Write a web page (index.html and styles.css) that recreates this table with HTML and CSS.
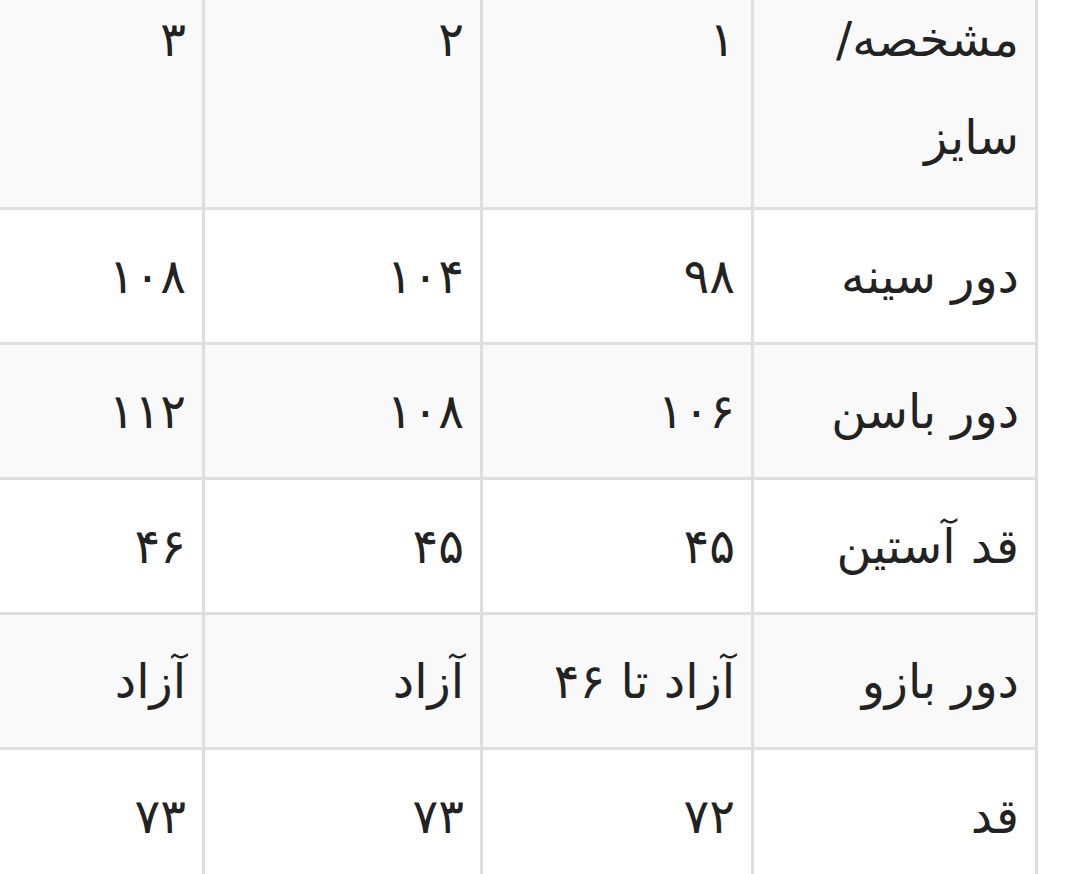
FILE: index.html
```html
<!DOCTYPE html>
<html lang="fa" dir="rtl">
<head>
<meta charset="utf-8">
<link rel="stylesheet" href="styles.css">
</head>
<body>
<div class="wrap">
<table class="size-table">
<colgroup>
<col class="c1"><col class="c2"><col class="c3"><col class="c4">
</colgroup>
<tbody>
<tr class="head"><td>مشخصه/<br>سایز</td><td>۱</td><td>۲</td><td>۳</td></tr>
<tr><td>دور سینه</td><td>۹۸</td><td>۱۰۴</td><td>۱۰۸</td></tr>
<tr><td>دور باسن</td><td>۱۰۶</td><td>۱۰۸</td><td>۱۱۲</td></tr>
<tr><td>قد آستین</td><td>۴۵</td><td>۴۵</td><td>۴۶</td></tr>
<tr><td>دور بازو</td><td>آزاد تا ۴۶</td><td>آزاد</td><td>آزاد</td></tr>
<tr><td>قد</td><td>۷۲</td><td>۷۳</td><td>۷۳</td></tr>
</tbody>
</table>
</div>
</body>
</html>
```
FILE: styles.css
```css
html, body {
  margin: 0;
  padding: 0;
  background: #ffffff;
  overflow: hidden;
}
.wrap {
  width: 1080px;
  height: 874px;
  overflow: hidden;
}
.size-table {
  direction: rtl;
  border-collapse: collapse;
  table-layout: fixed;
  width: 1058px;
  margin: -26px 42px 0 0;
  font-family: "DejaVu Sans", "Noto Sans", sans-serif;
  font-size: 48px;
  color: #222222;
}
.c1 { width: 284px; }
.c2 { width: 271px; }
.c3 { width: 278px; }
.c4 { width: 225px; }
.size-table td {
  border: 3px solid #dedede;
  padding: 17px 16px;
  line-height: 98px;
  height: 98px;
  text-align: right;
  vertical-align: middle;
  white-space: nowrap;
}
.size-table tr.head td {
  vertical-align: top;
  padding-top: 13px;
  padding-bottom: 21px;
}
.size-table tr:nth-child(odd) td {
  background: #f9f9f9;
}
.size-table tr:nth-child(even) td {
  background: #ffffff;
}
```
